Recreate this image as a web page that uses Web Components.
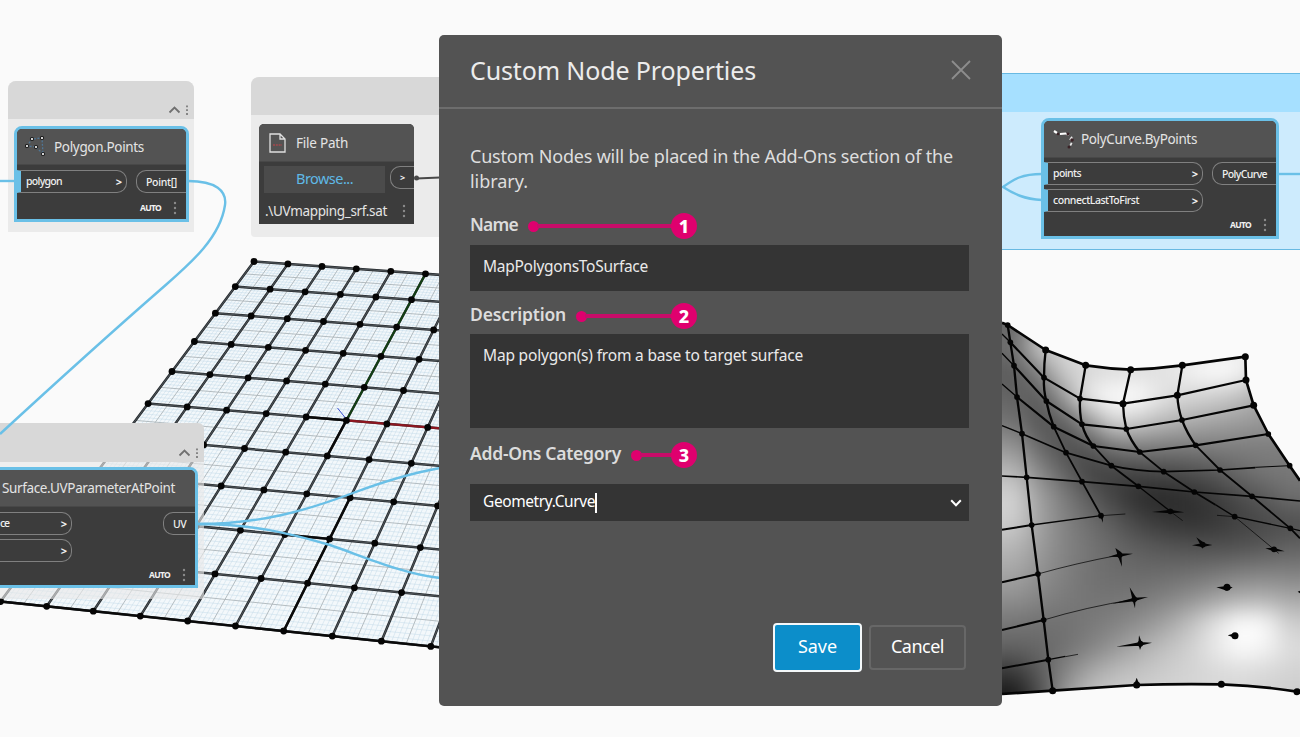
<!DOCTYPE html>
<html lang="en">
<head>
<meta charset="utf-8">
<title>Custom Node Properties</title>
<style>
html,body{margin:0;height:100%;overflow:hidden;background:#fafafa;font-family:"Noto Sans","Open Sans",sans-serif}
</style>
</head>
<body>
<dyn-workspace></dyn-workspace>
<script>
function define(name, html, setup) {
  customElements.define(name, class extends HTMLElement {
    connectedCallback() {
      if (this.shadowRoot) return;
      const root = this.attachShadow({mode: 'open'});
      root.innerHTML = typeof html === 'function' ? html(this) : html;
      if (setup) setup(this, root);
    }
  });
}

/* Flat sample surface in perspective: 10 x 10 cells, each with a fine grid. */
function planeSvg() {
  const A = [254,261.5], B = [425.5,273.8], C = [235.5,626], D = [.5,601.5];
  const dx1 = B[0]-C[0], dx2 = D[0]-C[0], dx3 = A[0]-B[0]+C[0]-D[0];
  const dy1 = B[1]-C[1], dy2 = D[1]-C[1], dy3 = A[1]-B[1]+C[1]-D[1];
  const det = dx1*dy2-dx2*dy1, g = (dx3*dy2-dx2*dy3)/det, h = (dx1*dy3-dx3*dy1)/det;
  const a = B[0]-A[0]+g*B[0], b = D[0]-A[0]+h*D[0], d = B[1]-A[1]+g*B[1], e = D[1]-A[1]+h*D[1];
  const P = (c, r) => { const u = c/5, v = r/10, w = g*u+h*v+1;
    return [((a*u+b*v+A[0])/w).toFixed(1), ((d*u+e*v+A[1])/w).toFixed(1)]; };
  const seg = (p, q) => `M${p}L${q}`;
  let fine = '', mid = '', main = '', dots = '';
  for (let i = 0; i <= 100; i++) {
    const s = seg(P(i/10,0), P(i/10,10)) + seg(P(0,i/10), P(10,i/10));
    if (i % 10 === 0) main += s; else if (i % 5 === 0) mid += s; else fine += s;
  }
  for (let c = 0; c <= 10; c++) for (let r = 0; r <= 10; r++) {
    const p = P(c, r); dots += `<circle cx="${p[0]}" cy="${p[1]}" r="3.4"/>`;
  }
  return `<polygon points="${P(0,0)} ${P(10,0)} ${P(10,10)} ${P(0,10)}" fill="#f3f8fb"/>
  <path d="${fine}" stroke="#c0d8e6" stroke-width=".65" opacity=".7"/>
  <path d="${mid}" stroke="#adb5ba" stroke-width=".9"/>
  <path d="${main}" stroke="#262b2f" stroke-width="2.5"/>
  <path d="${main}" stroke="#7c8286" stroke-width=".5"/>
  <path d="${seg(P(5,0),P(5,5))}" stroke="#123f12" stroke-width="2"/>
  <path d="${seg(P(5,5),P(10,5))}" stroke="#8c1620" stroke-width="2.2"/>
  <path d="M337.5 408L347 420" stroke="#3c4fd0" stroke-width="1"/>
  <path d="M${P(4,5)}L${P(5,5)}L${P(5,6)}M${P(6,7)}L${P(6,10)}M${P(5,8)}L${P(6,8)}M${P(0,10)}L${P(10,10)}" stroke="#0a0a0a" stroke-width="2.4"/>
  <g fill="#050505">${dots}</g>`;
}

/* Curved target surface; shade holds its luminance, one value per 25px patch. */
const shade = [
 [100,170,200,220,230,230,230,230,230,230,230,230],
 [110,205,215,225,230,228,228,228,230,235,230,230],
 [90,130,205,215,222,222,225,242,255,248,205,200],
 [100,88,155,240,255,255,225,212,205,190,165,150],
 [115,85,92,150,215,200,182,172,162,155,150,150],
 [150,105,78,84,118,125,122,122,125,125,125,125],
 [185,138,98,66,64,68,72,78,88,105,118,120],
 [212,160,125,92,66,44,40,46,58,75,90,110],
 [205,162,130,110,90,68,55,50,54,65,72,78],
 [182,155,132,117,104,93,86,82,80,82,88,98],
 [166,145,128,114,108,106,107,111,118,126,130,128],
 [145,133,123,116,116,120,129,142,158,172,175,165],
 [118,113,113,120,129,142,162,190,225,255,250,205],
 [98,103,113,129,150,172,192,208,232,252,245,220],
 [55,90,132,168,188,197,205,211,216,220,216,210],
 [20,75,155,195,203,207,211,215,216,215,210,205]];
function surfaceSvg() {
  let cells = '';
  for (let j = -1; j < 17; j++) for (let i = -1; i < 13; i++) {
    const v = shade[Math.min(15, Math.max(0, j))][Math.min(11, Math.max(0, i))];
    cells += `<rect x="${i*75}" y="${j*75}" width="76" height="76" fill="rgb(${v},${v},${v})"/>`;
  }
  const dots = [[17,45],[25,97],[36,167],[45,261],[60,371],[74,502],[89,645],[108,792],[125,930],[139,1049],[152,1142],
    [131,120],[126,203],[133,273],[155,350],[192,428],[240,515],[297,617],[251,166],[234,266],[240,343],[274,408],[328,467],[409,529],[505,604],
    [386,179],[363,281],[373,357],[413,426],[485,485],[577,546],[698,620],[816,718],[541,166],[526,256],[540,330],[581,406],[654,480],[750,559],[865,655],
    [730,140],[732,210],[755,286],[799,372],[863,467],[353,735],[397,868],[415,1001],[404,1125],[602,704],[675,832],[699,977],[658,1123],[885,1145]];
  const big = new Set(['131,120','251,166','386,179','541,166','730,140','732,210','755,286','675,832','699,977','404,1125','152,1142','658,1123','885,1145','363,281','526,256']);
  return `<defs><clipPath id="sf"><path d="M0 38L17 45L131 120L251 166Q318 176 386 179Q465 176 541 166L730 140L732 210L755 286L799 372L863 467L894 512V1146L885 1145Q770 1128 658 1123Q520 1121 404 1125L152 1142L0 1152Z"/></clipPath>
  <filter id="soft" x="-10%" y="-10%" width="120%" height="120%" color-interpolation-filters="sRGB"><feGaussianBlur stdDeviation="35"/></filter></defs>
  <g transform="translate(1002 310) scale(.33333)">
   <g clip-path="url(#sf)"><g filter="url(#soft)">${cells}</g></g>
   <g stroke="#050505" stroke-linejoin="round" stroke-width="8">
    <path d="M0 38L17 45L131 120L251 166Q318 176 386 179Q465 176 541 166L730 140L732 210L755 286L799 372L863 467L894 512"/>
    <path d="M0 1152L152 1142L404 1125Q520 1121 658 1123Q780 1128 885 1145L894 1147"/>
    <path stroke-width="6.5" d="M25 97L126 203L234 266L363 281L526 256L732 210M36 167L133 273L240 343L373 357L540 330L755 286M45 261L155 350L274 408L413 426L581 406L799 372"/>
    <path stroke-width="4" d="M0 72L25 97M0 130L36 167M0 222L45 261M0 347L60 371"/>
    <path stroke-width="5" d="M60 371L192 428L328 467Q400 484 485 485L654 480L760 473"/><path stroke-width="3" d="M760 472L863 467"/>
    <path stroke-width="5" d="M0 498L74 502L240 515L409 529L577 546L750 559L894 573"/>
    <path stroke-width="6" d="M0 659L89 645M0 817L108 792M0 960L125 930M0 1075L139 1049"/>
    <path stroke-width="4" d="M89 645L297 617M698 620L865 655L894 662M139 1049L190 1039"/>
    <path stroke-width="2.2" d="M297 617L370 612M645 616L698 620M108 792Q220 760 353 735M125 930Q250 892 397 868M190 1040L228 1033M505 604L542 632M698 620L816 718L830 730"/>
    <path stroke-width="7" d="M17 45L25 97L36 167L45 261L60 371L74 502L89 645L108 792L125 930L139 1049L152 1142"/>
    <path stroke-width="7" d="M131 120Q126 160 126 203Q124 240 133 273Q140 310 155 350M251 166L234 266Q232 310 240 343Q250 380 274 408M386 179L363 281Q364 320 373 357Q385 390 413 426M541 166L526 256Q528 295 540 330Q555 370 581 406"/>
    <path stroke-width="5.5" d="M155 350L192 428L240 515L297 617M274 408L328 467L409 529M413 426L485 485L577 546L640 584M581 406L654 480L750 559L865 655L894 685"/>
    <path stroke-width="4" d="M409 529L505 604M640 584L698 620"/>
   </g>
   <g fill="#050505">
    <path d="M450 606L505 599L547 607L505 610ZM293 615L303 638L302 612ZM340 714L358 727L360 770L349 742ZM320 740L353 730L393 731L353 741ZM383 832L401 860L399 895L391 868ZM330 881L397 863L438 861L397 874ZM411 976L421 1001L414 1020L409 1001ZM342 1010L415 996L450 998L415 1007ZM583 682L608 700L602 716ZM570 706L602 699L631 705L602 711ZM643 832L675 828L692 832L675 842ZM677 976L699 970L699 984ZM404 1103L413 1126L396 1126ZM790 715L816 713L848 724L816 724ZM887 845L894 842V850Z"/>
    ${dots.map(p => `<circle cx="${p[0]}" cy="${p[1]}" r="${big.has(p.join()) ? 10.5 : 8.5}"/>`).join('')}
   </g></g>`;
}

define('dyn-scene', () => `<style>:host{display:block}svg{display:block}</style>
<svg width="1300" height="737" viewBox="0 0 1300 737" fill="none">${planeSvg()}${surfaceSvg()}</svg>`);

define('dyn-wires', `<style>:host{display:block;pointer-events:none}svg{display:block}</style>
<svg width="1300" height="737" viewBox="0 0 1300 737" fill="none" stroke="#6ac0e7" stroke-width="2.4">
<path d="M0 181H16"/>
<path d="M188 181C216 181 227 191 225 205C220 240 186 267 160 290C105 338 50 388 0 434"/>
<path d="M198 524C260 524 305 511 353 493C385 481 412 473 440 468"/>
<path d="M198 524C250 524 285 532 330 545C365 557 400 573 440 578"/>
<path d="M1042 174C1022 174 1014 179 1003 187C1014 194 1024 199 1042 200"/>
<path d="M1278 174H1300"/>
<path d="M416 178.500L440 177.500" stroke="#484848" stroke-width="2"/><circle cx="416.500" cy="178" r="2.500" fill="#484848" stroke="none"/>
</svg>`);

/* A group frame behind nodes; --head, --body and --hh set its colours and header height. */
define('dyn-group', `<style>
:host{display:flex;flex-direction:column;box-sizing:border-box;overflow:hidden;background:var(--body,#ebebeb)}
header{box-sizing:border-box;height:var(--hh,38px);background:var(--head,#d8d8d8);display:flex;justify-content:flex-end;align-items:flex-end;padding:0 4px 3px 0;gap:3px}
</style><header><slot></slot></header>`);
define('dyn-group-tools', `<style>:host{display:block}svg{display:block}</style>
<svg width="22" height="12" fill="none" stroke="#707070"><path d="M1.500 8.500L6.500 3.500L11.500 8.500" stroke-width="1.800"/><path d="M19 1.500V11" stroke-width="1.600" stroke-dasharray="1.800 2"/></svg>`);
define('dyn-dots', `<style>:host{display:block}svg{display:block}</style>
<svg width="4" height="14" fill="#8b8b8b"><circle cx="2" cy="2" r="1.200"/><circle cx="2" cy="7" r="1.200"/><circle cx="2" cy="12" r="1.200"/></svg>`);

define('dyn-port', el => `<style>
:host{display:flex;box-sizing:border-box;height:23px;border:1px solid #808080;align-items:center;font-size:10.500px;line-height:20px;color:#f0f0f0;font-weight:500;flex:none}
:host([side=in]){border-left:0;border-radius:0 10px 10px 0;padding:0 4px 2px 5px;justify-content:space-between}
:host([side=in][on]){border-left:4px solid #6ac0e7}
:host([side=out]){border-right:0;border-radius:10px 0 0 10px;padding:0 0 0 9px}
i{font-style:normal;font-size:11px;font-weight:700;position:relative;top:1px}
</style><slot></slot>${el.getAttribute('side') === 'in' ? '<i>&gt;</i>' : ''}`);

define('dyn-node', `<style>
:host{display:flex;flex-direction:column;box-sizing:border-box;background:#3c3c3c;border-radius:8px 8px 0 0;color:#e4e4e4;overflow:hidden}
:host([selected]){border:3px solid #6ac0e7}
header{flex:none;height:var(--hh);background:#535353;display:flex;align-items:center;box-sizing:border-box;border-bottom:1px solid #484848;padding-left:var(--pl,8px);gap:var(--gap,8px);font-size:13.500px;line-height:20px}
main{flex:1;display:flex;flex-direction:column}
</style><header><slot name="icon"></slot><slot name="title"></slot></header><main><slot></slot></main>`);

/* Inline text that tracks its letters so that it spans exactly w pixels. */
define('fit-text', `<style>:host{display:inline-block;white-space:nowrap}</style><slot></slot>`, el => {
  const w = +el.getAttribute('w'), n = el.textContent.length, now = el.getBoundingClientRect().width;
  if (w && now) { el.style.letterSpacing = ((w - now) / n).toFixed(3) + 'px'; }
});

define('dyn-callout', el => `<style>
:host{display:flex;align-items:center;flex:1;margin-left:9.500px;height:26px;position:relative;top:2px}
b{flex:none;width:11px;height:11px;border-radius:50%;background:#df006e}
s{flex:1;height:4px;background:#c80c69;margin:0 -2px}
span{flex:none;width:26px;height:26px;border-radius:50%;background:#df006e;color:#fff;font:800 18px/26px "Noto Sans",sans-serif;text-align:center}
</style><b></b><s></s><span>${el.getAttribute('n')}</span>`);

define('dyn-label', `<style>
:host{display:flex;width:227px;height:26px;font-size:17.500px;line-height:26px;font-weight:600;color:#dcdcdc}
</style><slot></slot>`);
define('dyn-field', `<style>
:host{display:flex;box-sizing:border-box;width:499px;background:#343434;color:#eaeaea;font-size:15.500px;line-height:25px;padding:0 7px 0 13px;justify-content:space-between}
</style><slot></slot>`);
define('dyn-button', `<style>
:host{display:flex;box-sizing:border-box;align-items:center;justify-content:center;width:97px;height:45px;border:2px solid #676767;border-radius:4px;color:#fff;font-size:18px;line-height:24px;padding-bottom:3px}
:host([primary]){width:89px;height:49px;border:2.500px solid #f4f8fa;background:#0c8eca}
</style><slot></slot>`);

define('dyn-dialog', `<style>
:host{display:flex;flex-direction:column;box-sizing:border-box;background:#535353;border-radius:5px;color:#dedede;overflow:hidden}
header{flex:none;box-sizing:border-box;height:74px;border-bottom:2px solid #6d6d6d;display:flex;align-items:center;justify-content:space-between;padding:0 31px 2px}
h1{margin:0;font-size:25px;line-height:34px;font-weight:400;color:#ececec}
main{padding:35px 31px 0;font-size:18px;line-height:25px}
p{margin:0 0 17px}
footer{display:flex;align-items:center;gap:7px;margin:102px 36px 0 auto}
.caret{display:inline-block;width:1.500px;height:20px;background:#fff}
.val{display:flex;align-items:center}
</style>
<header><h1><fit-text w="286">Custom Node Properties</fit-text></h1>
<svg width="20" height="20" fill="none" stroke="#8d8d8d" stroke-width="1.800"><path d="M1 1L19 19M19 1L1 19"/></svg></header>
<main>
<p><fit-text w="483">Custom Nodes will be placed in the Add-Ons section of the</fit-text><br><fit-text w="58">library.</fit-text></p>
<dyn-label><fit-text w="48">Name</fit-text><dyn-callout n="1"></dyn-callout></dyn-label>
<dyn-field style="height:46px;margin-top:8px;padding-top:9px"><fit-text w="165">MapPolygonsToSurface</fit-text></dyn-field>
<dyn-label style="margin-top:10px"><fit-text w="96">Description</fit-text><dyn-callout n="2"></dyn-callout></dyn-label>
<dyn-field style="height:94px;margin-top:7px;padding-top:9px"><fit-text w="320">Map polygon(s) from a base to target surface</fit-text></dyn-field>
<dyn-label style="margin-top:12px"><fit-text w="151">Add-Ons Category</fit-text><dyn-callout n="3"></dyn-callout></dyn-label>
<dyn-field style="height:37px;margin-top:18px;align-items:center;color:#fff"><div class="val"><fit-text w="112" style="position:relative;top:-1px">Geometry.Curve</fit-text><span class="caret"></span></div>
<svg width="12" height="8" fill="none" stroke="#fff" stroke-width="2"><path d="M1.200 1.200L6 6.200L10.800 1.200"/></svg></dyn-field>
</main>
<footer><dyn-button primary><fit-text w="39">Save</fit-text></dyn-button><dyn-button><fit-text w="53">Cancel</fit-text></dyn-button></footer>`);

define('dyn-workspace', `<style>
:host{display:block;position:relative;width:1300px;height:737px;overflow:hidden;background:#fafafa}
.at{position:absolute}
.row{display:flex;justify-content:space-between;align-items:flex-start}
.foot{display:flex;justify-content:flex-end;align-items:center;gap:12px;font-size:8.500px;line-height:12px;font-weight:700;color:#f2f2f2}
svg{display:block;flex:none}
.browse{width:121px;height:27px;background:#4b4b4b;color:#5fb9e6;font-size:14.500px;line-height:25px;text-align:center}
</style>
<dyn-scene class="at" style="left:0;top:0"></dyn-scene>

<dyn-group class="at" style="left:8px;top:81px;width:186px;height:151px;border-radius:8px 8px 0 0"><dyn-group-tools></dyn-group-tools></dyn-group>
<dyn-group class="at" style="left:251px;top:77px;width:230px;height:160px;border-radius:8px 8px 0 4px"></dyn-group>
<dyn-group class="at" style="left:-20px;top:423px;width:224px;height:176px;border-radius:0 6px 0 0;--hh:39px;--head:#d8d8d8;--body:rgba(232,232,232,.620)"><dyn-group-tools></dyn-group-tools></dyn-group>
<dyn-group class="at" style="left:990px;top:73px;width:320px;height:177px;--hh:38px;--head:#a6e0ff;--body:#cdebfd;border:1px solid #68b9e2"></dyn-group>

<dyn-wires class="at" style="left:0;top:0"></dyn-wires>

<dyn-node selected class="at" style="left:14px;top:126px;width:175px;height:96px;--hh:36px;--gap:7px">
 <svg slot="icon" width="22" height="22" fill="none"><path d="M2 10L7 3L17 2L18 18L11 11Z" stroke="#4f7696" stroke-width="1.300" stroke-dasharray="2 1.500"/><g fill="#1c1c1c"><circle cx="2" cy="10" r="2.100"/><circle cx="7" cy="3" r="2.100"/><circle cx="17" cy="2" r="2.100"/><circle cx="18" cy="18" r="2.100"/><circle cx="11" cy="11" r="2.100"/></g><g fill="#fff"><circle cx="2" cy="10" r="1.100"/><circle cx="7" cy="3" r="1.100"/><circle cx="17" cy="2" r="1.100"/><circle cx="18" cy="18" r="1.100"/><circle cx="11" cy="11" r="1.100"/></g></svg>
 <fit-text slot="title" w="90">Polygon.Points</fit-text>
 <div class="row" style="padding-top:5px"><dyn-port side="in" on style="width:110px"><fit-text w="36">polygon</fit-text></dyn-port><dyn-port side="out" style="width:50px"><fit-text w="31">Point[]</fit-text></dyn-port></div>
 <div class="foot" style="padding:8px 9px 0 0"><fit-text w="21">AUTO</fit-text><dyn-dots></dyn-dots></div>
</dyn-node>

<dyn-node class="at" style="left:259px;top:124px;width:155px;height:100px;--hh:38px;--pl:10px;--gap:10px;border-radius:5px 5px 0 0">
 <svg slot="icon" width="17" height="20" fill="none" stroke="#e0e0e0" stroke-width="1.300"><path d="M1 1H11L16 6V19H1ZM11 1V6H16"/><path d="M4 12H13" stroke="#a5484c" stroke-width="1.500" stroke-dasharray="2 .800"/></svg>
 <fit-text slot="title" w="52">File Path</fit-text>
 <div class="row" style="padding:4px 0 0 5px"><div class="browse"><fit-text w="57">Browse...</fit-text></div><dyn-port side="out" style="width:24px;font-size:9px;font-weight:700">&gt;</dyn-port></div>
 <div class="row" style="padding:8px 8px 0 6px;font-size:13.500px;line-height:20px;align-items:center"><fit-text w="122">.\\UVmapping_srf.sat</fit-text><dyn-dots></dyn-dots></div>
</dyn-node>

<dyn-node selected class="at" style="left:-60px;top:467px;width:258px;height:121px;--hh:37px;--pl:59px">
 <fit-text slot="title" w="173">Surface.UVParameterAtPoint</fit-text>
 <div class="row" style="padding-top:5px"><dyn-port side="in" style="width:129px;padding-left:57px"><fit-text w="9">ce</fit-text></dyn-port><dyn-port side="out" style="width:32px"><fit-text w="13">UV</fit-text></dyn-port></div>
 <div class="row" style="padding-top:4px"><dyn-port side="in" style="width:129px"><span></span></dyn-port></div>
 <div class="foot" style="padding:6px 9px 0 0"><fit-text w="21">AUTO</fit-text><dyn-dots></dyn-dots></div>
</dyn-node>

<dyn-node selected class="at" style="left:1041px;top:118px;width:238px;height:121px;--hh:37px;--gap:5px">
 <svg slot="icon" width="24" height="20" fill="none"><path d="M2 2L5 4M8 5L14 4.500M18 11L20 9" stroke="#fff" stroke-width="2.200"/><path d="M14 5Q20 6 20 11Q20 15 17 18" stroke="#e8e8e8" stroke-width="1.800" stroke-dasharray="3 3"/><g fill="#3a2226"><circle cx="6" cy="5" r="1.300"/><circle cx="16" cy="5" r="1.500"/><circle cx="20" cy="11" r="1.800"/><circle cx="17" cy="18" r="1.500"/></g></svg>
 <fit-text slot="title" w="116">PolyCurve.ByPoints</fit-text>
 <div class="row" style="padding-top:4px"><dyn-port side="in" on style="width:159px"><fit-text w="28">points</fit-text></dyn-port><dyn-port side="out" style="width:64px"><fit-text w="45">PolyCurve</fit-text></dyn-port></div>
 <div class="row" style="padding-top:4px"><dyn-port side="in" on style="width:159px"><fit-text w="86">connectLastToFirst</fit-text></dyn-port></div>
 <div class="foot" style="padding:6px 9px 0 0"><fit-text w="21">AUTO</fit-text><dyn-dots></dyn-dots></div>
</dyn-node>

<dyn-dialog class="at" style="left:439px;top:35px;width:563px;height:671px"></dyn-dialog>`);
</script>
</body>
</html>
